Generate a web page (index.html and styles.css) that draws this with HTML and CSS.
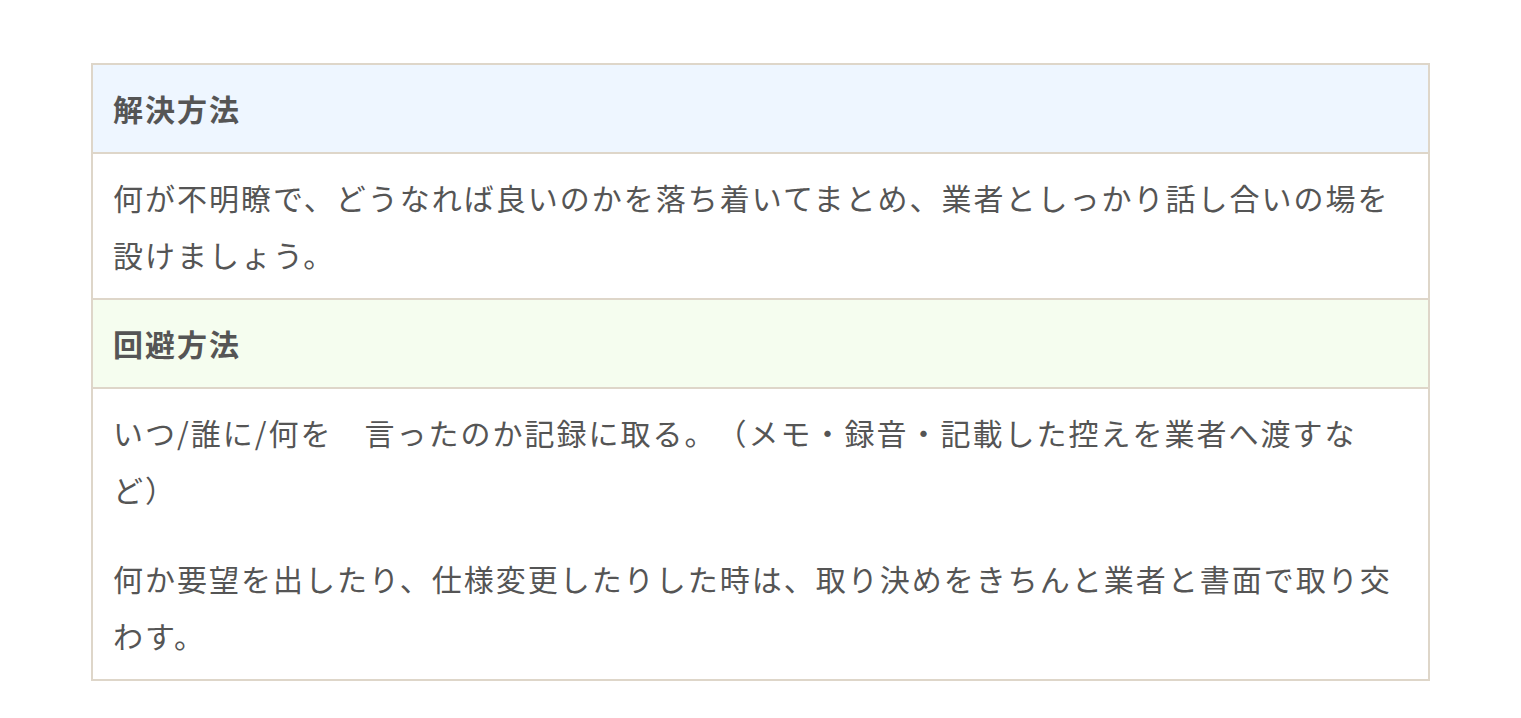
FILE: index.html
```html
<!DOCTYPE html>
<html lang="ja">
<head>
<meta charset="utf-8">
<title>解決方法</title>
<link rel="stylesheet" href="styles.css">
</head>
<body>
<table class="info-table">
  <tr><th class="head head-blue">解決方法</th></tr>
  <tr><td class="cell"><p>何が不明瞭で、どうなれば良いのかを落ち着いてまとめ、業者としっかり話し合いの場を設けましょう。</p></td></tr>
  <tr><th class="head head-green">回避方法</th></tr>
  <tr><td class="cell"><p>いつ/誰に/何を　言ったのか記録に取る。（メモ・録音・記載した控えを業者へ渡すなど）</p><p>何か要望を出したり、仕様変更したりした時は、取り決めをきちんと業者と書面で取り交わす。</p></td></tr>
</table>
</body>
</html>
```
FILE: styles.css
```css
html, body {
  margin: 0;
  padding: 0;
  background: #ffffff;
}
body {
  padding-top: 63px;
  font-family: "Noto Sans CJK JP", "Noto Sans", sans-serif;
  color: #555555;
}
.info-table {
  width: 1339px;
  margin: 0 auto;
  border-collapse: collapse;
  border: 2px solid #ded6c9;
}
.head, .cell {
  border: 2px solid #ded6c9;
  padding: 15px 20px;
  text-align: left;
  font-size: 30px;
  letter-spacing: 2px;
  line-height: 57px;
  text-spacing-trim: space-all;
}
.head {
  font-weight: 700;
  color: #555555;
}
.head-blue { background: #eef6ff; }
.head-green { background: #f5fdef; }
.cell {
  font-weight: 400;
}
.cell p {
  margin: 0;
}
.cell p + p {
  margin-top: 32px;
}
```
